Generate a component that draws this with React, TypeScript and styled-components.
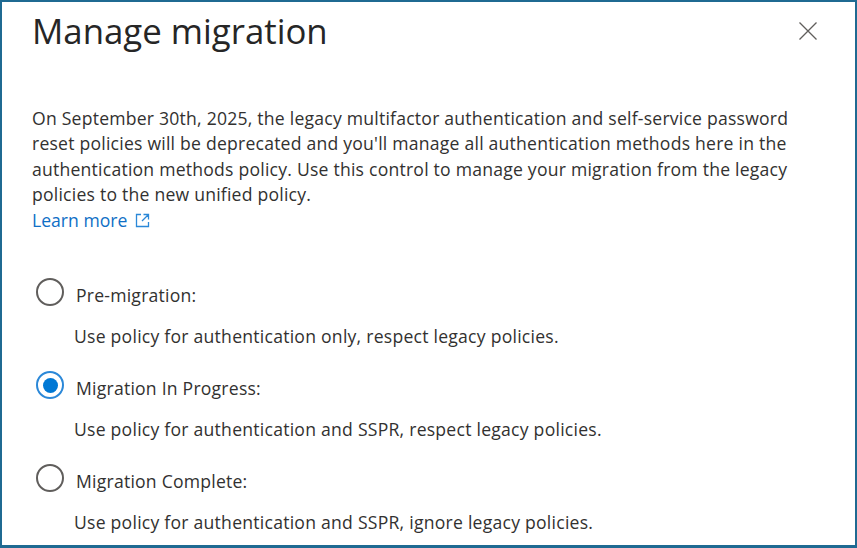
import React from 'react';
import styled, { createGlobalStyle } from 'styled-components';

const GlobalStyle = createGlobalStyle`
  html, body { margin: 0; padding: 0; background: #fff; }
  body { font-family: "Open Sans", "Noto Sans", "Liberation Sans", sans-serif; }
`;

const Panel = styled.div`
  box-sizing: border-box;
  width: 857px;
  height: 548px;
  overflow: hidden;
  border: 2px solid #1f6a92;
  border-width: 2px 2px 3px 2px;
  padding: 0 0 0 30px;
  color: #323130;
`;

const Header = styled.header`
  display: flex;
  justify-content: space-between;
  align-items: flex-start;
  height: 54px;
  padding-right: 37px;
`;

const Title = styled.h1`
  margin: 7px 0 0;
  font-size: 34.8px;
  line-height: 44px;
  font-weight: 400;
  color: #262626;
`;

const CloseButton = styled.button`
  display: flex;
  margin: 19px 0 0;
  padding: 0;
  border: 0;
  background: none;
`;

const Intro = styled.p`
  margin: 50px 0 0;
  width: 776px;
  font-size: 17.6px;
  letter-spacing: 0.22px;
  line-height: 25.4px;
`;

const LearnMore = styled.a`
  display: inline-flex;
  align-items: center;
  gap: 8px;
  color: #0f6fc6;
  letter-spacing: 0;
  text-decoration: none;
`;

const Options = styled.div`
  display: flex;
  flex-direction: column;
  gap: 23px;
  margin-top: 45px;
`;

const Option = styled.div`
  display: flex;
  flex-direction: column;
  gap: 18px;
`;

const OptionLabel = styled.label`
  display: flex;
  align-items: center;
  gap: 12px;
  height: 28px;
  padding-left: 4px;
  font-size: 17.6px;
  letter-spacing: 0.22px;
`;

const LabelText = styled.span`
  padding-top: 6px;
`;

const Radio = styled.span<{ $checked?: boolean }>`
  box-sizing: border-box;
  display: flex;
  align-items: center;
  justify-content: center;
  width: 28px;
  height: 28px;
  border-radius: 50%;
  border: 2px solid ${(p) => (p.$checked ? '#2b88d8' : '#605e5c')};
  &::after {
    content: '';
    display: ${(p) => (p.$checked ? 'block' : 'none')};
    width: 15px;
    height: 15px;
    border-radius: 50%;
    background: #0078d4;
  }
`;

const OptionText = styled.div`
  padding-left: 42px;
  font-size: 17.6px;
  letter-spacing: 0.24px;
  line-height: 24px;
`;

const options = [
  { label: 'Pre-migration:', text: 'Use policy for authentication only, respect legacy policies.' },
  { label: 'Migration In Progress:', text: 'Use policy for authentication and SSPR, respect legacy policies.', checked: true },
  { label: 'Migration Complete:', text: 'Use policy for authentication and SSPR, ignore legacy policies.' },
];

export default function App() {
  return (
    <Panel>
      <GlobalStyle />
      <Header>
        <Title>Manage migration</Title>
        <CloseButton aria-label="Close">
          <svg width="20" height="20" viewBox="0 0 20 20" fill="none" stroke="#605e5c" strokeWidth="1.3">
            <path d="M1.5 1.5 18.5 18.5M18.5 1.5 1.5 18.5" />
          </svg>
        </CloseButton>
      </Header>
      <Intro>
        On September 30th, 2025, the legacy multifactor authentication and self-service password reset policies will be
        deprecated and you'll manage all authentication methods here in the authentication methods policy. Use this
        control to manage your migration from the legacy policies to the new unified policy.
        <br />
        <LearnMore href="#">
          Learn more
          <svg width="15" height="15" viewBox="0 0 15 15" fill="none" stroke="#2b88d8" strokeWidth="1.3">
            <path d="M6 1.5H1.5v12h12V9M8.5 1.5h5v5M13.5 1.5 7 8" />
          </svg>
        </LearnMore>
      </Intro>
      <Options>
        {options.map((o) => (
          <Option key={o.label}>
            <OptionLabel>
              <Radio $checked={o.checked} />
              <LabelText>{o.label}</LabelText>
            </OptionLabel>
            <OptionText>{o.text}</OptionText>
          </Option>
        ))}
      </Options>
    </Panel>
  );
}
